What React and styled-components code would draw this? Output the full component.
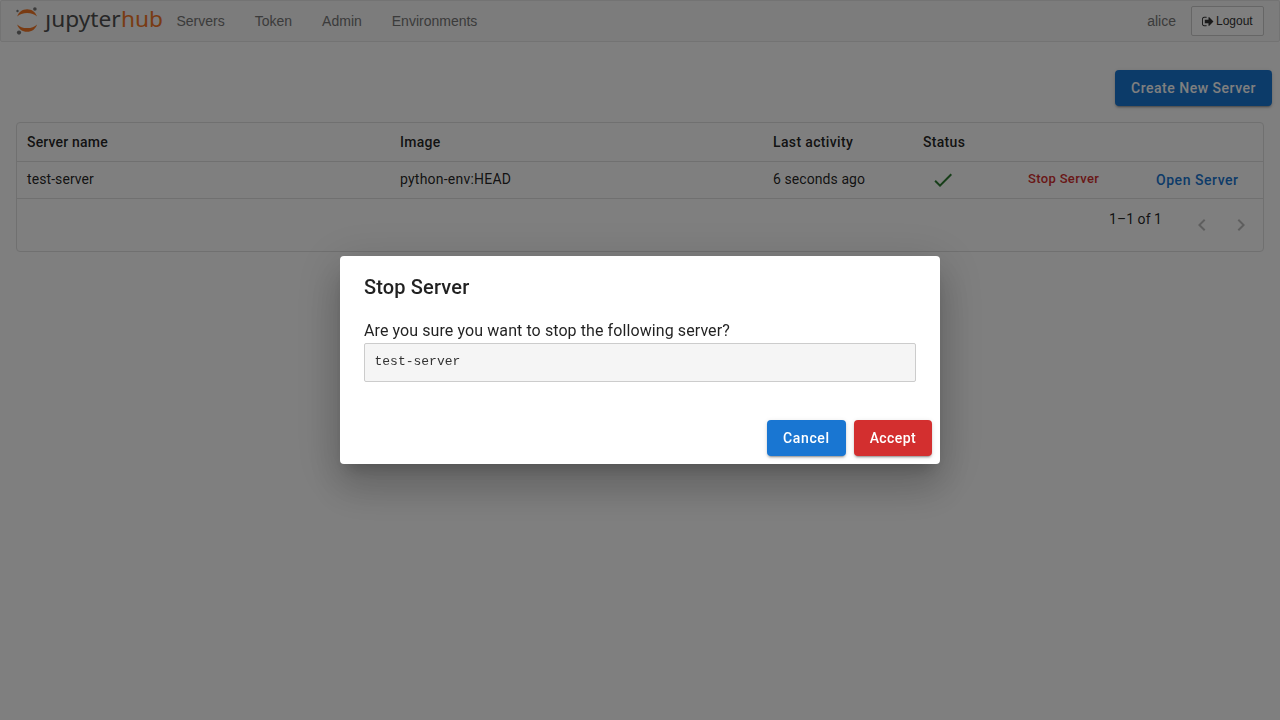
import React from "react";
import styled, { createGlobalStyle } from "styled-components";

const GlobalStyle = createGlobalStyle`
  *, *::before, *::after { box-sizing: border-box; }
  html, body { margin: 0; background: #fff; }
  body {
    height: 720px;
    overflow: hidden;
    color: rgba(0, 0, 0, 0.87);
    font-family: Roboto, "Liberation Sans", sans-serif;
    font-size: 14px;
  }
`;

const Navbar = styled.nav`
  display: flex;
  align-items: center;
  height: 42px;
  padding: 0 15px;
  background: #f8f8f8;
  border: 1px solid #e7e7e7;
  border-radius: 2px;
  font-family: "Liberation Sans", Arial, sans-serif;
  color: #777;
`;

const Logo = styled.svg`
  display: block;
  width: 150px;
  height: 40px;
  margin-right: -4.5px;
`;

const NavLink = styled.a`
  padding: 0 15px;
  line-height: 20px;
`;

const NavRight = styled.div`
  display: flex;
  align-items: center;
  gap: 15px;
  margin-left: auto;
`;

const LogoutButton = styled.button`
  display: flex;
  align-items: center;
  width: 73px;
  height: 30px;
  padding: 0 0 0 9.5px;
  gap: 1.5px;
  border: 1px solid #ccc;
  border-radius: 2px;
  background: #fff;
  color: #333;
  font: 12px/18px "Liberation Sans", Arial, sans-serif;
`;

const Toolbar = styled.div`
  display: flex;
  justify-content: flex-end;
  padding: 28px 8px 16px;
`;

const tones = { primary: "#1976d2", error: "#d32f2f" };

const SolidButton = styled.button`
  height: 36px;
  padding: 0 16px;
  border: 0;
  border-radius: 4px;
  background: ${(p) => tones[p.$tone]};
  color: #fff;
  font: 500 14px/24px Roboto, sans-serif;
  letter-spacing: ${(p) => p.$spacing || "0.4px"};
  white-space: nowrap;
  box-shadow: 0 3px 1px -2px rgba(0, 0, 0, 0.2), 0 2px 2px 0 rgba(0, 0, 0, 0.14),
    0 1px 5px 0 rgba(0, 0, 0, 0.12);
`;

const TextButton = styled.button`
  padding: 0;
  border: 0;
  background: none;
  color: ${(p) => tones[p.$tone]};
  font: 500 ${(p) => p.$size}px/22px Roboto, sans-serif;
  letter-spacing: ${(p) => p.$spacing}px;
`;

const Grid = styled.section`
  height: 130px;
  margin: 0 16px;
  border: 1px solid #e0e0e0;
  border-radius: 4px;
  letter-spacing: 0.15px;
`;

const Row = styled.div`
  display: grid;
  grid-template-columns: 373px 373px 150px 100px 125px 1fr;
  align-items: center;
  height: ${(p) => p.$height}px;
  border-bottom: 1px solid #e0e0e0;
  font-weight: ${(p) => (p.$head ? 500 : 400)};
`;

const Cell = styled.div`
  padding-left: ${(p) => p.$indent ?? 10}px;
  padding-bottom: ${(p) => p.$lift ?? 0}px;
  line-height: 20px;
  letter-spacing: ${(p) => p.$spacing ?? 0.15}px;
  white-space: nowrap;
  svg { display: block; }
`;

const Footer = styled.div`
  display: flex;
  justify-content: flex-end;
  padding: 10px 10px 0 0;
`;

const RangeLabel = styled.span`
  margin-right: 28px;
  line-height: 20px;
  letter-spacing: 0.05px;
`;

const Pager = styled.div`
  display: flex;
  gap: 15px;
  padding-top: 3.5px;
  color: rgba(0, 0, 0, 0.26);
`;

const Backdrop = styled.div`
  position: fixed;
  inset: 0;
  display: flex;
  align-items: center;
  justify-content: center;
  background: rgba(0, 0, 0, 0.5);
`;

const Dialog = styled.div`
  width: 600px;
  height: 208px;
  border-radius: 4px;
  background: #fff;
  box-shadow: 0 11px 15px -7px rgba(0, 0, 0, 0.2), 0 24px 38px 3px rgba(0, 0, 0, 0.14),
    0 9px 46px 8px rgba(0, 0, 0, 0.12);
`;

const DialogTitle = styled.h2`
  margin: 0;
  padding: 15px 24px 17px;
  font: 500 20px/32px Roboto, sans-serif;
  letter-spacing: 0.15px;
`;

const DialogBody = styled.div`
  padding: 0 24px;
  font-size: 16px;
  line-height: 22px;
  letter-spacing: 0.09px;
`;

const ServerName = styled.pre`
  height: 39px;
  margin: 1px 0 0;
  padding: 9px 9.5px;
  border: 1px solid #ccc;
  border-radius: 2px;
  background: #f5f5f5;
  color: #333;
  font: 13px/18px "Liberation Mono", monospace;
  letter-spacing: 0;
`;

const DialogActions = styled.div`
  display: flex;
  justify-content: flex-end;
  gap: 8px;
  padding: 38px 8px 8px;
`;

const Icon = ({ d, size = 24, box = 24, color = "currentColor" }) => (
  <svg width={size} height={size} viewBox={`0 0 ${box} ${box}`} fill={color}>
    <path d={d} />
  </svg>
);

const CHECK = "M9 16.17 4.83 12l-1.42 1.41L9 19 21 7l-1.41-1.41z";
const LEFT = "M15.41 16.59 10.83 12l4.58-4.59L14 6l-6 6 6 6z";
const RIGHT = "M8.59 16.59 13.17 12 8.59 7.41 10 6l6 6-6 6z";
const SIGN_OUT =
  "M640 1440q0 4 1 20t.5 26.5-3 23.5-10 19.5-20.5 6.5h-320q-119 0-203.5-84.5t-84.5-203.5v-704q0-119 84.5-203.5t203.5-84.5h320q13 0 22.5 9.5t9.5 22.5q0 4 1 20t.5 26.5-3 23.5-10 19.5-20.5 6.5h-320q-66 0-113 47t-47 113v704q0 66 47 113t113 47h312l11.5 1 11.5 3 8 5.5 7 9 2 13.5zm928-544q0 26-19 45l-544 544q-19 19-45 19t-45-19-19-45v-288h-448q-26 0-45-19t-19-45v-384q0-26 19-45t45-19h448v-288q0-26 19-45t45-19 45 19l544 544q19 19 19 45z";

function JupyterHubLogo() {
  return (
    <Logo viewBox="16 1 150 40">
      <g fill="#f37726">
        <path d="M17.2 16.6C18.6 12 22.4 9.3 27.1 9.3s8.5 2.7 9.9 7.3C34.7 14.2 31.3 13 27.1 13s-7.6 1.2-9.9 3.6z" />
        <path d="M17.2 24.4C18.6 29 22.4 31.7 27.1 31.7s8.5-2.7 9.9-7.3C34.7 26.8 31.3 28 27.1 28s-7.6-1.2-9.9-3.6z" />
      </g>
      <g fill="#767677">
        <circle cx="34.9" cy="9" r="1.8" />
        <circle cx="17.5" cy="11" r="1.2" />
        <circle cx="19" cy="32.6" r="2.1" />
      </g>
      <g fontFamily="'Noto Sans', sans-serif" fontSize="22.5">
        <text x="45.3" y="26.6" fill="#4e4e4e" textLength="75.3" lengthAdjust="spacingAndGlyphs">ȷupyter</text>
        <text x="121" y="26.6" fill="#f37726" textLength="42" lengthAdjust="spacingAndGlyphs">hub</text>
      </g>
    </Logo>
  );
}

export default function App() {
  return (
    <>
      <GlobalStyle />
      <Navbar>
        <JupyterHubLogo />
        <NavLink>Servers</NavLink>
        <NavLink>Token</NavLink>
        <NavLink>Admin</NavLink>
        <NavLink>Environments</NavLink>
        <NavRight>
          <span>alice</span>
          <LogoutButton>
            <Icon d={SIGN_OUT} size={13} box={1792} />
            Logout
          </LogoutButton>
        </NavRight>
      </Navbar>
      <Toolbar>
        <SolidButton $tone="primary" $spacing="0.51px">Create New Server</SolidButton>
      </Toolbar>
      <Grid>
        <Row $head $height={39}>
          <Cell $spacing={0.18}>Server name</Cell>
          <Cell $spacing={0.3}>Image</Cell>
          <Cell $spacing={0.36}>Last activity</Cell>
          <Cell $spacing={0.3}>Status</Cell>
        </Row>
        <Row $height={37}>
          <Cell $spacing={0.08} $lift={2}>test-server</Cell>
          <Cell $spacing={0.22} $lift={2}>python-env:HEAD</Cell>
          <Cell $spacing={0.08} $lift={2}>6 seconds ago</Cell>
          <Cell $indent={18}><Icon d={CHECK} color="#2e7d32" /></Cell>
          <Cell $indent={15} $lift={2}><TextButton $tone="error" $size={13} $spacing={0.34}>Stop Server</TextButton></Cell>
          <Cell $indent={18}><TextButton $tone="primary" $size={14} $spacing={0.54}>Open Server</TextButton></Cell>
        </Row>
        <Footer>
          <RangeLabel>1–1 of 1</RangeLabel>
          <Pager>
            <Icon d={LEFT} />
            <Icon d={RIGHT} />
          </Pager>
        </Footer>
      </Grid>
      <Backdrop>
        <Dialog>
          <DialogTitle>Stop Server</DialogTitle>
          <DialogBody>
            Are you sure you want to stop the following server?
            <ServerName>test-server</ServerName>
          </DialogBody>
          <DialogActions>
            <SolidButton $tone="primary" $spacing="0.62px">Cancel</SolidButton>
            <SolidButton $tone="error">Accept</SolidButton>
          </DialogActions>
        </Dialog>
      </Backdrop>
    </>
  );
}
